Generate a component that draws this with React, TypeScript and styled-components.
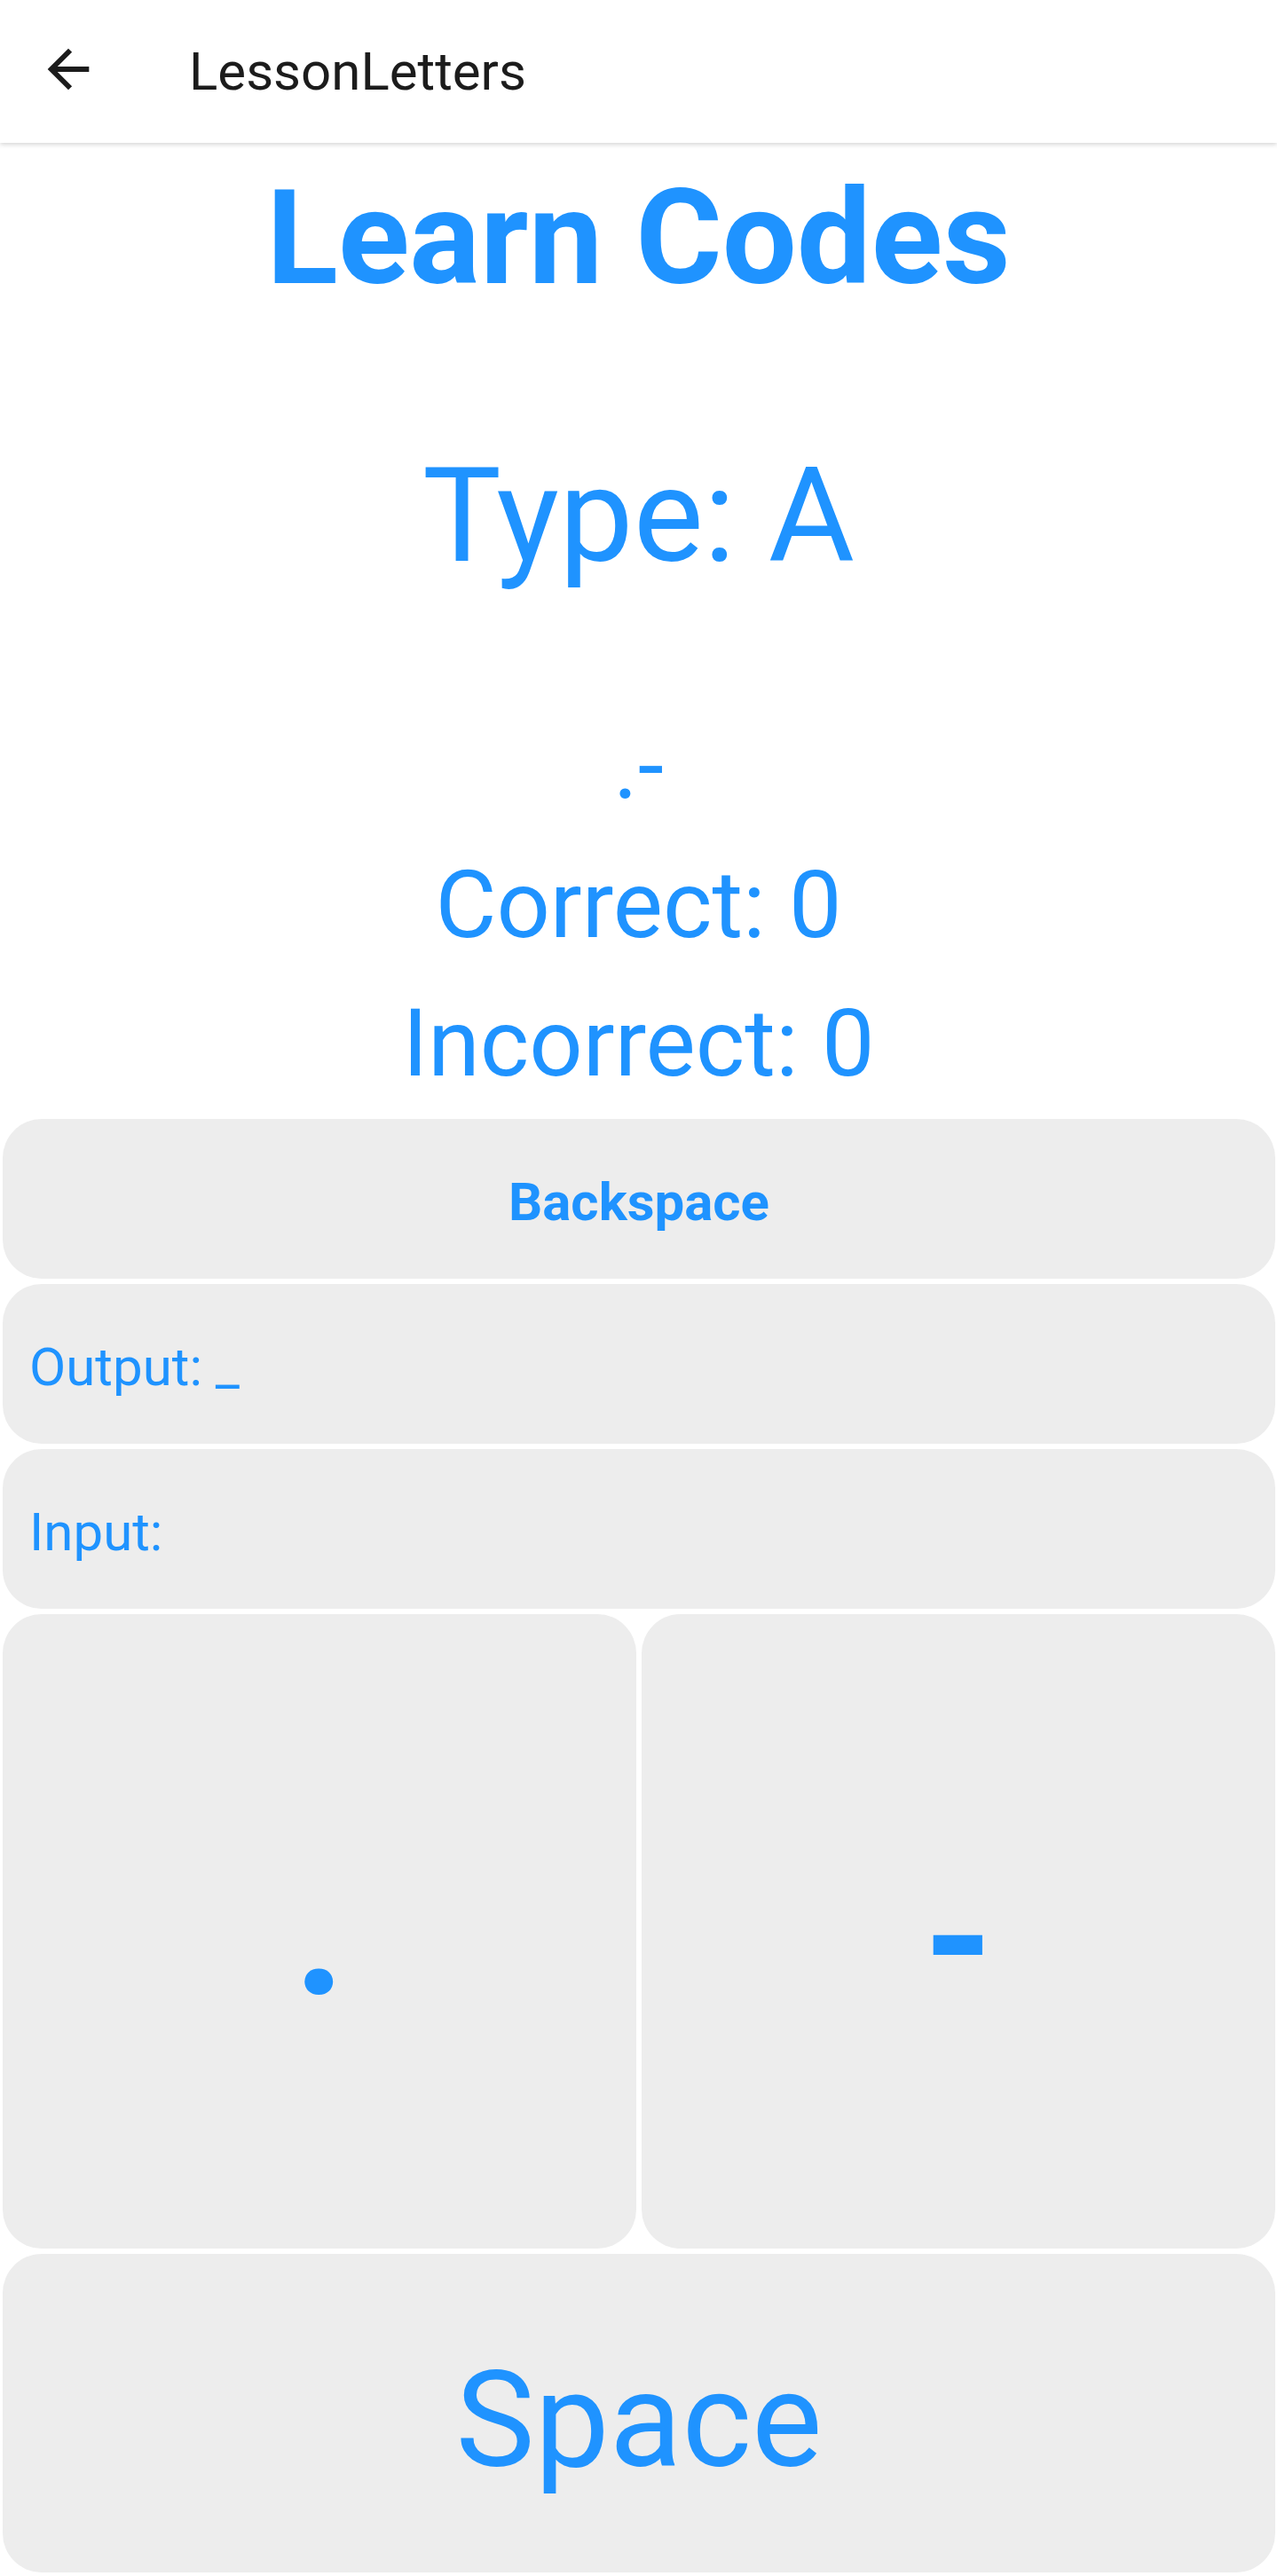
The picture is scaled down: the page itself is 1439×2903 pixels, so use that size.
import React from "react";
import styled, { createGlobalStyle } from "styled-components";

const BLUE = "#1f93ff";
const KEY_BG = "#ededed";

const GlobalStyle = createGlobalStyle`
  html, body {
    margin: 0;
    padding: 0;
    background: #ffffff;
  }
  body {
    font-family: Roboto, "Noto Sans", "Liberation Sans", sans-serif;
  }
  * { box-sizing: border-box; }
`;

const Page = styled.div`
  width: 1439px;
  min-height: 2903px;
  display: flex;
  flex-direction: column;
  background: #ffffff;
`;

const AppBar = styled.header`
  position: relative;
  z-index: 1;
  height: 161px;
  flex: none;
  display: flex;
  align-items: center;
  background: #ffffff;
  box-shadow: 0 2px 5px rgba(0, 0, 0, 0.16);
`;

const BackButton = styled.button`
  width: 70px;
  height: 70px;
  margin-left: 42px;
  margin-top: -5px;
  padding: 0;
  border: none;
  background: transparent;
  color: #1c1c1c;
  display: flex;
  align-items: center;
  justify-content: center;
`;

const BarTitle = styled.h1`
  margin: 0 0 0 101px;
  font-size: 60px;
  line-height: 70px;
  font-weight: 400;
  color: #1c1c1c;
`;

const Stage = styled.main`
  display: flex;
  flex-direction: column;
  align-items: center;
`;

const Line = styled.div<{ $size: number; $lh: number; $top: number; $bold?: boolean }>`
  margin-top: ${(p) => p.$top}px;
  font-size: ${(p) => p.$size}px;
  line-height: ${(p) => p.$lh}px;
  font-weight: ${(p) => (p.$bold ? 700 : 400)};
  color: ${BLUE};
  text-align: center;
  white-space: pre;
`;

const Keys = styled.section`
  margin-top: 23px;
  padding: 0 2px 4px 3px;
  display: flex;
  flex-direction: column;
  gap: 6px;
`;

const Key = styled.button<{ $h: number; $align?: "center" | "start"; $shift?: number }>`
  height: ${(p) => p.$h}px;
  width: 100%;
  border: none;
  border-radius: 44px;
  background: ${KEY_BG};
  color: ${BLUE};
  font-family: Roboto, "Noto Sans", "Liberation Sans", sans-serif;
  display: flex;
  align-items: center;
  justify-content: ${(p) => (p.$align === "start" ? "flex-start" : "center")};
  padding: ${(p) => p.$shift ?? 0}px ${(p) => (p.$align === "start" ? "30px" : "0")} 0;
  margin: 0;
`;

const KeyLabel = styled.span<{ $size: number; $bold?: boolean }>`
  font-size: ${(p) => p.$size}px;
  line-height: ${(p) => Math.round(p.$size * 1.172)}px;
  font-weight: ${(p) => (p.$bold ? 700 : 400)};
  white-space: pre;
`;

const SignalRow = styled.div`
  display: grid;
  grid-template-columns: 1fr 1fr;
  gap: 6px;
`;

const ArrowBack = () => (
  <svg width="70" height="70" viewBox="0 0 24 24" fill="currentColor" aria-hidden="true">
    <path d="M20 11H7.83l5.59-5.59L12 4l-8 8 8 8 1.41-1.41L7.83 13H20v-2z" />
  </svg>
);

export default function App() {
  return (
    <>
      <GlobalStyle />
      <Page>
        <AppBar>
          <BackButton aria-label="Back">
            <ArrowBack />
          </BackButton>
          <BarTitle>LessonLetters</BarTitle>
        </AppBar>
        <Stage>
          <Line $size={149} $lh={175} $top={20} $bold>
            Learn Codes
          </Line>
          <Line $size={149} $lh={175} $top={138}>
            Type: A
          </Line>
          <Line $size={106} $lh={124} $top={132}>
            .-
          </Line>
          <Line $size={106} $lh={124} $top={33}>
            Correct: 0
          </Line>
          <Line $size={106} $lh={124} $top={32}>
            Incorrect: 0
          </Line>
        </Stage>
        <Keys>
          <Key $h={180} $shift={8}>
            <KeyLabel $size={60} $bold>
              Backspace
            </KeyLabel>
          </Key>
          <Key $h={180} $align="start" $shift={8}>
            <KeyLabel $size={60}>Output: _</KeyLabel>
          </Key>
          <Key $h={180} $align="start" $shift={8}>
            <KeyLabel $size={60}>Input:</KeyLabel>
          </Key>
          <SignalRow>
            <Key $h={715} $shift={4}>
              <KeyLabel $size={200} $bold>
                .
              </KeyLabel>
            </Key>
            <Key $h={715} $shift={16}>
              <KeyLabel $size={200} $bold>
                -
              </KeyLabel>
            </Key>
          </SignalRow>
          <Key $h={359} $shift={16}>
            <KeyLabel $size={150}>Space</KeyLabel>
          </Key>
        </Keys>
      </Page>
    </>
  );
}
